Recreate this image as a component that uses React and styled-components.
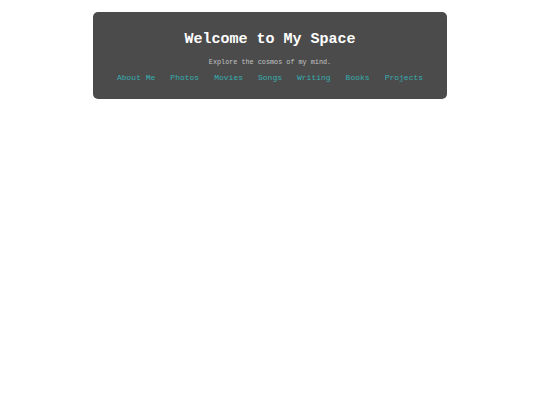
import styled, { createGlobalStyle } from 'styled-components';

const GlobalStyle = createGlobalStyle`
  body {
    margin: 0;
    background: #ffffff;
    font-family: "Liberation Mono", "Courier New", monospace;
  }
`;

const Header = styled.header`
  width: 354px;
  margin: 12px auto 0;
  box-sizing: border-box;
  padding: 19px 0 16px;
  background: #4b4b4b;
  border-radius: 5px;
  text-align: center;
`;

const Title = styled.h1`
  margin: 0;
  font-size: 15px;
  line-height: 18px;
  font-weight: bold;
  color: #ffffff;
`;

const Tagline = styled.p`
  margin: 9px 0 0;
  font-size: 6.8px;
  line-height: 8px;
  color: #c4c4c4;
`;

const Nav = styled.nav`
  display: flex;
  justify-content: center;
  gap: 15px;
  margin-top: 7px;
`;

const NavLink = styled.a`
  font-size: 8px;
  line-height: 10px;
  color: #36adb0;
  text-decoration: none;
`;

const links = ['About Me', 'Photos', 'Movies', 'Songs', 'Writing', 'Books', 'Projects'];

export default function App() {
  return (
    <>
      <GlobalStyle />
      <Header>
        <Title>Welcome to My Space</Title>
        <Tagline>Explore the cosmos of my mind.</Tagline>
        <Nav>
          {links.map((l) => (
            <NavLink key={l} href="#">{l}</NavLink>
          ))}
        </Nav>
      </Header>
    </>
  );
}
